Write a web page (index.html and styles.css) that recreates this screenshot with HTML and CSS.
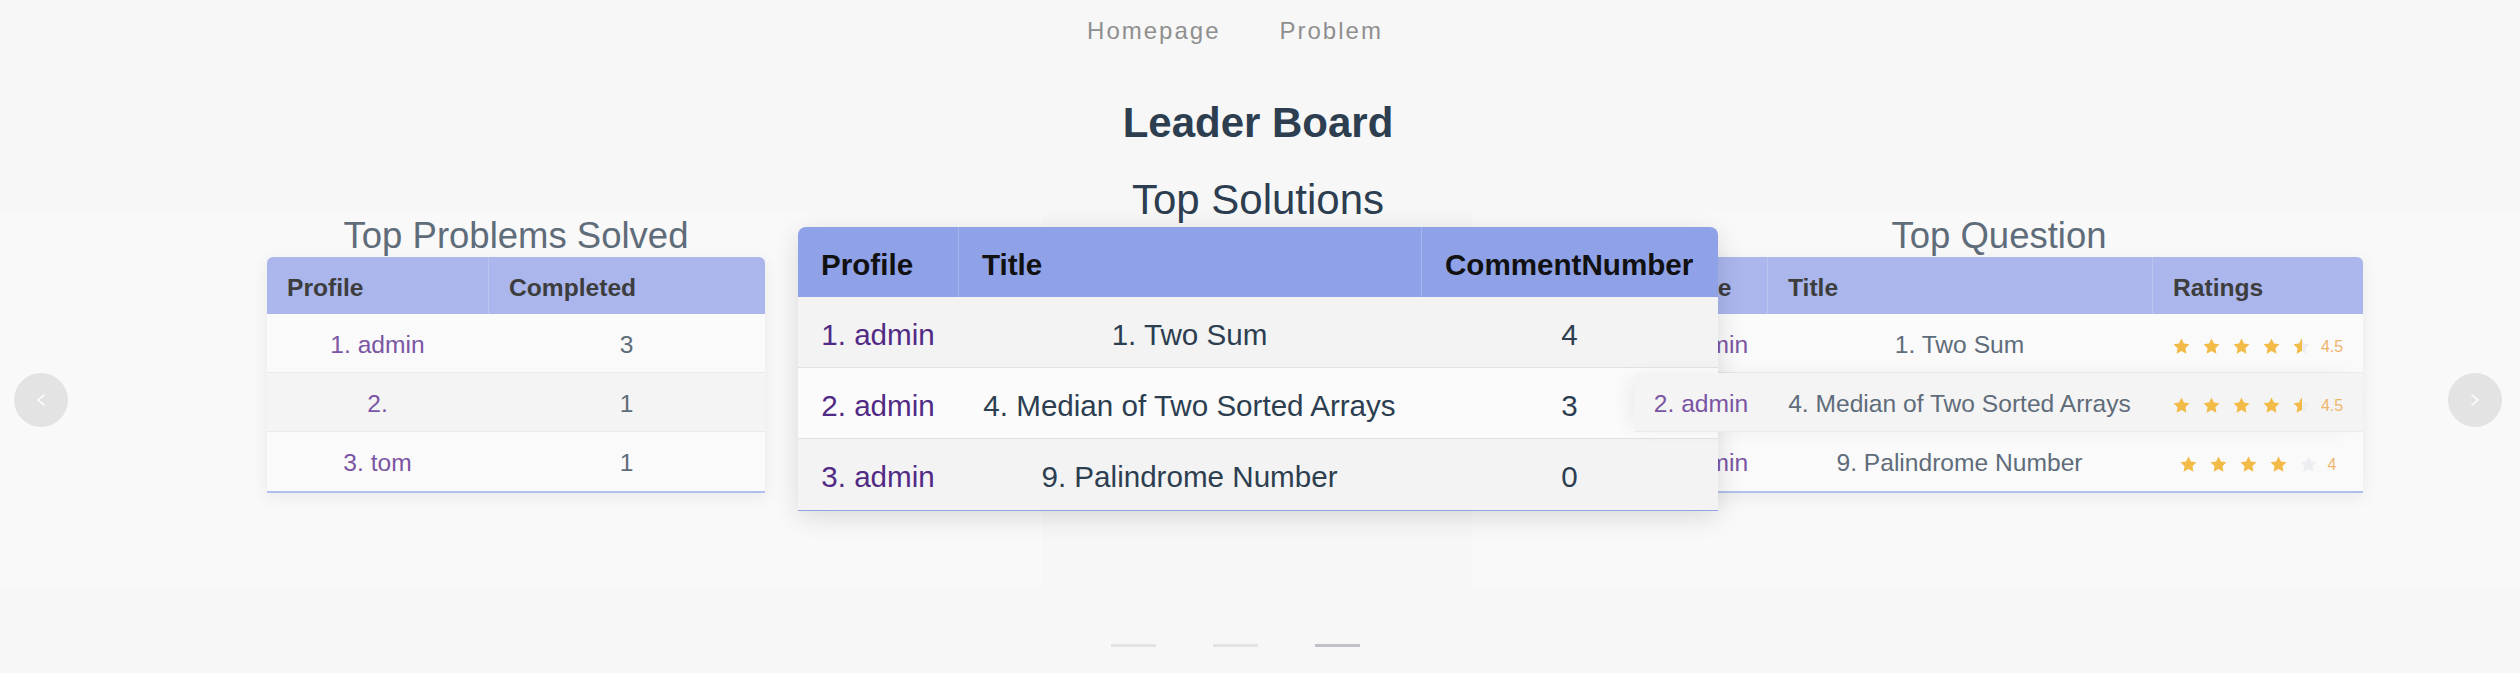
FILE: index.html
```html
<!DOCTYPE html>
<html lang="en">
<head>
<meta charset="utf-8">
<title>Leader Board</title>
<link rel="stylesheet" href="styles.css">
</head>
<body>
<svg class="defs" width="0" height="0" aria-hidden="true">
  <defs>
    <linearGradient id="half-star" x1="0" x2="1" y1="0" y2="0">
      <stop offset="50%" stop-color="#f2bb48"/>
      <stop offset="50%" stop-color="#eceef2"/>
    </linearGradient>
    <symbol id="star" viewBox="0 0 24 24">
      <polygon points="12,2 15.09,8.26 22,9.27 17,14.14 18.18,21.02 12,17.77 5.82,21.02 7,14.14 2,9.27 8.91,8.26"/>
    </symbol>
  </defs>
</svg>

<nav class="nav">
  <a class="nav-link" href="#">Homepage</a>
  <a class="nav-link" href="#">Problem</a>
</nav>

<h1 class="page-title">Leader Board</h1>

<section class="carousel">
  <div class="item item--side item--left">
    <h2 class="card-title">Top Problems Solved</h2>
    <div class="board board--problems">
      <div class="board-head"><div class="th">Profile</div><div class="th">Completed</div></div>
      <div class="board-row"><div class="td"><a class="user" href="#">1. admin</a></div><div class="td">3</div></div>
      <div class="board-row"><div class="td"><a class="user" href="#">2.</a></div><div class="td">1</div></div>
      <div class="board-row"><div class="td"><a class="user" href="#">3. tom</a></div><div class="td">1</div></div>
    </div>
  </div>

  <div class="item item--center">
    <h2 class="card-title">Top Solutions</h2>
    <div class="board board--solutions">
      <div class="board-head"><div class="th">Profile</div><div class="th">Title</div><div class="th">CommentNumber</div></div>
      <div class="board-row"><div class="td"><a class="user" href="#">1. admin</a></div><div class="td">1. Two Sum</div><div class="td">4</div></div>
      <div class="board-row"><div class="td"><a class="user" href="#">2. admin</a></div><div class="td">4. Median of Two Sorted Arrays</div><div class="td">3</div></div>
      <div class="board-row"><div class="td"><a class="user" href="#">3. admin</a></div><div class="td">9. Palindrome Number</div><div class="td">0</div></div>
    </div>
  </div>

  <div class="item item--side item--right">
    <h2 class="card-title">Top Question</h2>
    <div class="board board--questions">
      <div class="board-head"><div class="th">Profile</div><div class="th">Title</div><div class="th">Ratings</div></div>
      <div class="board-row">
        <div class="td"><a class="user" href="#">1. admin</a></div>
        <div class="td">1. Two Sum</div>
        <div class="td td--rate"><span class="rate">
          <svg class="star"><use href="#star"/></svg><svg class="star"><use href="#star"/></svg><svg class="star"><use href="#star"/></svg><svg class="star"><use href="#star"/></svg><svg class="star star--half"><use href="#star"/></svg><span class="rate-score">4.5</span>
        </span></div>
      </div>
      <div class="board-row board-row--raised">
        <div class="td"><a class="user" href="#">2. admin</a></div>
        <div class="td">4. Median of Two Sorted Arrays</div>
        <div class="td td--rate"><span class="rate">
          <svg class="star"><use href="#star"/></svg><svg class="star"><use href="#star"/></svg><svg class="star"><use href="#star"/></svg><svg class="star"><use href="#star"/></svg><svg class="star star--half"><use href="#star"/></svg><span class="rate-score">4.5</span>
        </span></div>
      </div>
      <div class="board-row">
        <div class="td"><a class="user" href="#">3. admin</a></div>
        <div class="td">9. Palindrome Number</div>
        <div class="td td--rate"><span class="rate">
          <svg class="star"><use href="#star"/></svg><svg class="star"><use href="#star"/></svg><svg class="star"><use href="#star"/></svg><svg class="star"><use href="#star"/></svg><svg class="star star--void"><use href="#star"/></svg><span class="rate-score">4</span>
        </span></div>
      </div>
    </div>
  </div>

  <button class="arrow arrow--left" aria-label="Previous">
    <svg viewBox="0 0 18 18" width="18" height="18"><polyline points="12,4 6,9 12,14"/></svg>
  </button>
  <button class="arrow arrow--right" aria-label="Next">
    <svg viewBox="0 0 18 18" width="18" height="18"><polyline points="6,4 12,9 6,14"/></svg>
  </button>
</section>

<div class="indicators">
  <span class="indicator"></span>
  <span class="indicator"></span>
  <span class="indicator indicator--active"></span>
</div>
</body>
</html>
```

FILE: styles.css
```css
* { box-sizing: border-box; }

body {
  margin: 0;
  background: #f7f7f7;
  font-family: "Liberation Sans", Arial, sans-serif;
  color: #2c3e50;
}

.defs { position: absolute; width: 0; height: 0; }

/* ---------- top nav ---------- */
.nav {
  display: flex;
  justify-content: center;
  gap: 59px;
  padding: 16px 50px 0 0;
}
.nav-link {
  font-size: 24px;
  line-height: 30px;
  letter-spacing: 2px;
  color: #8f8f8f;
  text-decoration: none;
}

.page-title {
  margin: 53px 0 0;
  padding-right: 4px;
  font-size: 42px;
  line-height: 48px;
  font-weight: bold;
  text-align: center;
  color: #2c3e50;
}

/* ---------- carousel ---------- */
.carousel {
  position: relative;
  margin-top: 23px;
  height: 459px;
  display: grid;
  grid-template-columns: 100%;
  grid-template-rows: 100%;
  overflow: hidden;
}

.item {
  grid-area: 1 / 1;
  display: flex;
  flex-direction: column;
  align-items: center;
}

.item--side {
  align-self: center;
  width: 1052px;
  height: 375px;
  background: #f9f9f9;
}
.item--left { justify-self: start; margin-left: -10px; }
.item--right { justify-self: end; margin-right: -5px; }

.item--center {
  justify-self: center;
  align-self: start;
  margin-right: 4px;
  z-index: 2;
}

.card-title {
  margin: 0;
  font-weight: normal;
  white-space: nowrap;
}
.item--side .card-title {
  padding-top: 2px;
  font-size: 36.5px;
  line-height: 43px;
  color: #5f6c7a;
}
.item--center .card-title {
  padding-top: 3px;
  font-size: 42px;
  line-height: 54px;
  color: #2c3e50;
}

/* ---------- boards (tables) ---------- */
.board--problems { --cols: 221px 277px; }
.board--solutions { --cols: 160px 463px 297px; }
.board--questions { --cols: 132px 385px 211px; }

.board-head,
.board-row {
  display: grid;
  grid-template-columns: var(--cols);
}

.th {
  font-weight: bold;
  text-align: left;
  white-space: nowrap;
}
.th + .th { border-left: 1px solid rgba(255, 255, 255, 0.2); }

.td {
  text-align: center;
  white-space: nowrap;
}

.user { text-decoration: none; }

/* side cards (inactive, masked) */
.item--side .board {
  border-radius: 6px 6px 0 0;
  border-bottom: 2px solid #b3beec;
  box-shadow: 0 4px 18px rgba(0, 0, 0, 0.07);
}
.item--side .board-head {
  height: 57px;
  background: #aab6ec;
  border-radius: 6px 6px 0 0;
  color: #3d3d3d;
}
.item--side .th {
  font-size: 24.6px;
  padding: 4px 0 0 20px;
  line-height: 53px;
}
.item--side .board-row {
  height: 59px;
  background: #fafafa;
  border-bottom: 1px solid #ebebeb;
}
.item--side .board-row:nth-child(3) { background: #f4f4f4; }
.item--side .board-row:last-child { border-bottom: 0; }
.item--side .td {
  font-size: 24.6px;
  padding-top: 4px;
  line-height: 54px;
  color: #5f6c7a;
}
.item--side .td--rate { padding-top: 0; }
.item--side .user { color: #7a55a3; }

/* active card */
.item--center .board {
  border-radius: 8px 8px 0 0;
  border-bottom: 1px solid #8fa2e7;
  box-shadow: 0 6px 26px rgba(0, 0, 0, 0.13);
}
.item--center .board-head {
  height: 70px;
  background: #8fa2e7;
  border-radius: 8px 8px 0 0;
  color: #111;
}
.item--center .th {
  font-size: 29.6px;
  padding: 6px 0 0 23px;
  line-height: 64px;
}
.item--center .board-row {
  height: 71px;
  background: #f3f3f3;
  border-bottom: 1px solid #e2e2e2;
}
.item--center .board-row:nth-child(3) { background: #fbfbfb; }
.item--center .board-row:last-child { border-bottom: 0; }
.item--center .td {
  font-size: 29.6px;
  padding-top: 6px;
  line-height: 64px;
  color: #2c3e50;
}
.item--center .user { color: #512a85; }

/* hovered row of the right card sits above the active card */
.board-row--raised {
  position: relative;
  z-index: 3;
  box-shadow: -10px 0 22px -6px rgba(0, 0, 0, 0.08);
}

/* ---------- rating ---------- */
.td--rate {
  display: flex;
  align-items: center;
  justify-content: center;
}
.rate {
  display: inline-flex;
  align-items: center;
  gap: 11px;
  margin-top: 6px;
}
.star {
  width: 19px;
  height: 19px;
  fill: #f2bb48;
}
.star--half { fill: url(#half-star); }
.star--void { fill: #eceef2; }
.rate-score {
  margin-left: -1px;
  font-size: 16px;
  line-height: 19px;
  color: #efb46c;
}

/* ---------- arrows ---------- */
.arrow {
  position: absolute;
  top: 50%;
  z-index: 5;
  width: 54px;
  height: 54px;
  margin-top: -27px;
  padding: 0;
  border: 0;
  border-radius: 50%;
  background: #e3e3e4;
  display: flex;
  align-items: center;
  justify-content: center;
}
.arrow svg {
  fill: none;
  stroke: #fff;
  stroke-width: 1.6;
  stroke-linecap: round;
  stroke-linejoin: round;
}
.arrow--left { left: 14px; }
.arrow--right { right: 18px; }

/* ---------- indicators ---------- */
.indicators {
  display: flex;
  justify-content: center;
  gap: 57px;
  padding: 15px 49px 0 0;
}
.indicator {
  width: 45px;
  height: 3px;
  background: #e3e3e5;
}
.indicator--active { background: #c1c1c9; }
```
